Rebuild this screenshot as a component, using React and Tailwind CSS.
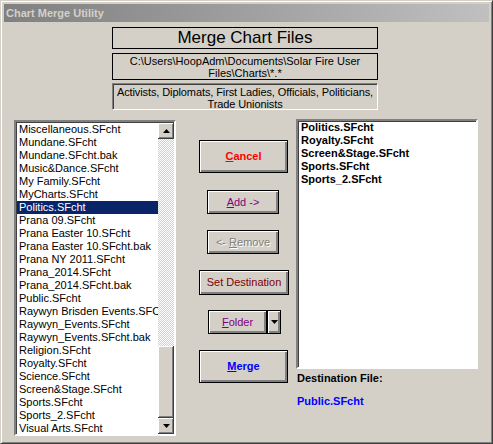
const files = [
  "Miscellaneous.SFcht",
  "Mundane.SFcht",
  "Mundane.SFcht.bak",
  "Music&Dance.SFcht",
  "My Family.SFcht",
  "MyCharts.SFcht",
  "Politics.SFcht",
  "Prana 09.SFcht",
  "Prana Easter 10.SFcht",
  "Prana Easter 10.SFcht.bak",
  "Prana NY 2011.SFcht",
  "Prana_2014.SFcht",
  "Prana_2014.SFcht.bak",
  "Public.SFcht",
  "Raywyn Brisden Events.SFCht",
  "Raywyn_Events.SFcht",
  "Raywyn_Events.SFcht.bak",
  "Religion.SFcht",
  "Royalty.SFcht",
  "Science.SFcht",
  "Screen&Stage.SFcht",
  "Sports.SFcht",
  "Sports_2.SFcht",
  "Visual Arts.SFcht",
];

const picked = [
  "Politics.SFcht",
  "Royalty.SFcht",
  "Screen&Stage.SFcht",
  "Sports.SFcht",
  "Sports_2.SFcht",
];

const raised =
  "bg-[#d4d0c8] shadow-[inset_-1px_-1px_0_#404040,inset_1px_1px_0_#ffffff,inset_-2px_-2px_0_#808080]";

const Btn = ({ className, children }) => {
  return (
    <button
      className={`flex items-center justify-center border border-black bg-[#d4d0c8] shadow-[inset_1px_1px_0_#ffffff,inset_-2px_-2px_0_#808080] leading-none ${className}`}
    >
      <span className="whitespace-pre">{children}</span>
    </button>
  );
};

const Arrow = ({ up }) => (
  <svg width="7" height="4" viewBox="0 0 7 4">
    {up ? (
      <path d="M3.5 0 L7 4 L0 4 Z" fill="#000" />
    ) : (
      <path d="M0 0 L7 0 L3.5 4 Z" fill="#000" />
    )}
  </svg>
);

const App = () => {
  return (
    <div className="w-[493px] h-[444px] overflow-hidden bg-[#d4d0c8] border border-t-[#d4d0c8] border-l-[#d4d0c8] border-r-[#404040] border-b-[#404040] shadow-[inset_1px_1px_0_#ffffff,inset_-1px_-1px_0_#808080] p-[3px] font-['Liberation_Sans',Arial,sans-serif] text-[11px] text-black">
      {/* title bar */}
      <div className="h-[18px] bg-gradient-to-r from-[#808080] to-[#c0c0c0] pl-[2px] leading-[18px] font-bold text-[#d4d0c8]">
        Chart Merge Utility
      </div>

      {/* headers */}
      <div className="ml-[108px] mt-[5px] w-[266px]">
        <div className="flex h-[22px] items-center justify-center border border-black text-[17px]">
          Merge Chart Files
        </div>
        <div className="mt-[4px] h-[27px] border border-black pt-[1px] text-center leading-[12px]">
          C:\Users\HoopAdm\Documents\Solar Fire User
          <br />
          Files\Charts\*.*
        </div>
        <div className="mt-[3px] h-[27px] border border-t-[#808080] border-l-[#808080] border-r-white border-b-white shadow-[inset_1px_1px_0_#404040] pt-[2px] text-center leading-[12px] tracking-[-0.1px]">
          Activists, Diplomats, First Ladies, Officials, Politicians,
          <br />
          Trade Unionists
        </div>
      </div>

      <div className="mt-[9px] flex items-start">
        {/* file list */}
        <div className="ml-[10px] mt-[1px] flex h-[316px] w-[162px] border-2 border-t-[#808080] border-l-[#808080] border-r-white border-b-[#ffffff] bg-white shadow-[inset_1px_1px_0_#404040]">
          <div className="min-w-0 flex-1 overflow-hidden pt-[1px] pl-[1px]">
            {files.map((f) => (
              <div
                key={f}
                className={`h-[13px] whitespace-nowrap pl-[2px] leading-[13px] ${
                  f === "Politics.SFcht" ? "bg-[#0a246a] text-white" : ""
                }`}
              >
                {f}
              </div>
            ))}
          </div>
          <div className="flex w-[16px] flex-col pt-[1px]">
            <div className={`flex h-[16px] items-center justify-center ${raised}`}>
              <Arrow up />
            </div>
            <div className="flex-1 bg-[repeating-conic-gradient(#ffffff_0_25%,#d4d0c8_0_50%)] bg-[length:2px_2px]" />
            <div className={`h-[72px] ${raised}`} />
            <div className={`flex h-[16px] items-center justify-center ${raised}`}>
              <Arrow />
            </div>
          </div>
        </div>

        {/* buttons */}
        <div className="flex w-[120px] flex-col items-start">
          <Btn className="ml-[23px] mt-[21px] h-[33px] w-[89px] font-bold text-[#ff0000]">
            <u>C</u>ancel
          </Btn>
          <Btn className="ml-[31px] mt-[17px] h-[24px] w-[72px] text-[#800080]">
            <u>A</u>dd -&gt;
          </Btn>
          <Btn className="ml-[31px] mt-[16px] h-[24px] w-[72px] text-[#808080] [text-shadow:1px_1px_0_#ffffff]">
            &lt;- <u>R</u>emove
          </Btn>
          <Btn className="ml-[23px] mt-[16px] h-[25px] w-[90px] text-[#800000]">
            Set Destination
          </Btn>
          <div className="ml-[32px] mt-[15px] flex">
            <Btn className="h-[24px] w-[59px] text-[#800080]">
              <u>F</u>older
            </Btn>
            <Btn className="h-[24px] w-[14px]">
              <Arrow />
            </Btn>
          </div>
          <Btn className="ml-[23px] mt-[16px] h-[33px] w-[89px] font-bold text-[#0000ff]">
            <u>M</u>erge
          </Btn>
        </div>

        {/* destination */}
        <div className="w-[182px]">
          <div className="h-[250px] border-2 border-t-[#808080] border-l-[#808080] border-r-white border-b-white bg-white pl-[3px] font-bold shadow-[inset_1px_1px_0_#404040]">
            {picked.map((p) => (
              <div key={p} className="h-[13px] leading-[13px]">
                {p}
              </div>
            ))}
          </div>
          <div className="mt-[3px] pl-[1px] font-bold leading-[13px]">
            Destination File:
          </div>
          <div className="mt-[10px] pl-[1px] font-bold leading-[13px] text-[#0000ff]">
            Public.SFcht
          </div>
        </div>
      </div>
    </div>
  );
};

export default App;
